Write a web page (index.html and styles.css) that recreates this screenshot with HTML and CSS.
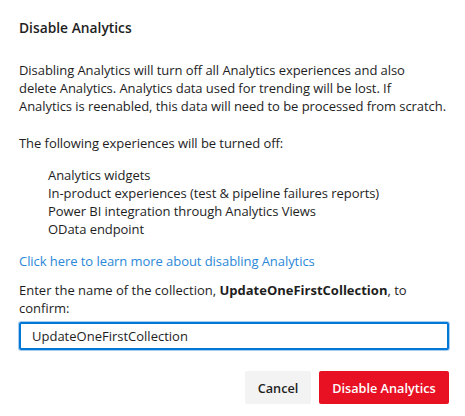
FILE: index.html
```html
<!DOCTYPE html>
<html lang="en">
<head>
<meta charset="utf-8">
<title>Disable Analytics</title>
<link rel="stylesheet" href="styles.css">
</head>
<body>
<div class="dialog">
  <h1 class="title">Disable Analytics</h1>
  <p class="text">Disabling Analytics will turn off all Analytics experiences and also<br>delete Analytics. Analytics data used for trending will be lost. If<br>Analytics is reenabled, this data will need to be processed from scratch.</p>
  <p class="text">The following experiences will be turned off:</p>
  <ul class="list">
    <li>Analytics widgets</li>
    <li>In-product experiences (test &amp; pipeline failures reports)</li>
    <li>Power BI integration through Analytics Views</li>
    <li>OData endpoint</li>
  </ul>
  <a class="link" href="#">Click here to learn more about disabling Analytics</a>
  <p class="text label">Enter the name of the collection, <b>UpdateOneFirstCollection</b>, to<br>confirm:</p>
  <div class="input">UpdateOneFirstCollection</div>
  <div class="actions">
    <button class="btn btn-default">Cancel</button>
    <button class="btn btn-danger">Disable Analytics</button>
  </div>
</div>
</body>
</html>
```
FILE: styles.css
```css
html, body {
  margin: 0;
  padding: 0;
  background: #ffffff;
}
body {
  font-family: "Open Sans", "Noto Sans", sans-serif;
  font-size: 13px;
  letter-spacing: -0.06px;
  color: #1e1e1e;
}
.dialog {
  width: 430px;
  min-height: 416px;
  box-sizing: content-box;
  padding: 18px 16px 0 19px;
  border-left: 1px solid #f4f4f4;
  margin-left: -1px;
}
.title {
  margin: 0;
  font-size: 13.8px;
  font-weight: 600;
  line-height: 20px;
  letter-spacing: 0;
}
.text {
  margin: 0;
  line-height: 18px;
  white-space: nowrap;
}
.title + .text {
  margin-top: 23px;
}
.text + .text {
  margin-top: 19px;
}
.list {
  list-style: none;
  margin: 14px 0 0;
  padding: 0 0 0 29px;
  line-height: 18px;
}
.link {
  display: block;
  margin-top: 14px;
  line-height: 18px;
  color: #2b88d8;
  text-decoration: none;
}
.label {
  margin-top: 11px;
  letter-spacing: 0;
}
.label b {
  font-weight: 700;
}
.input {
  margin-top: 5px;
  height: 24px;
  line-height: 24px;
  padding: 0 11px;
  border: 2px solid #0078d4;
  border-radius: 2px;
  box-shadow: 0 0 0 1px #a9cdf0;
  letter-spacing: 0;
}
.actions {
  display: flex;
  justify-content: flex-end;
  gap: 8px;
  margin-top: 21px;
}
.btn {
  font-family: inherit;
  font-size: 12.7px;
  height: 33px;
  border: none;
  border-radius: 2px;
  padding: 0;
  font-weight: 600;
  letter-spacing: 0;
}
.btn-default {
  background: #f3f3f3;
  color: #1e1e1e;
  width: 66px;
}
.btn-danger {
  background: #e81123;
  color: #ffffff;
  width: 130px;
}
```
